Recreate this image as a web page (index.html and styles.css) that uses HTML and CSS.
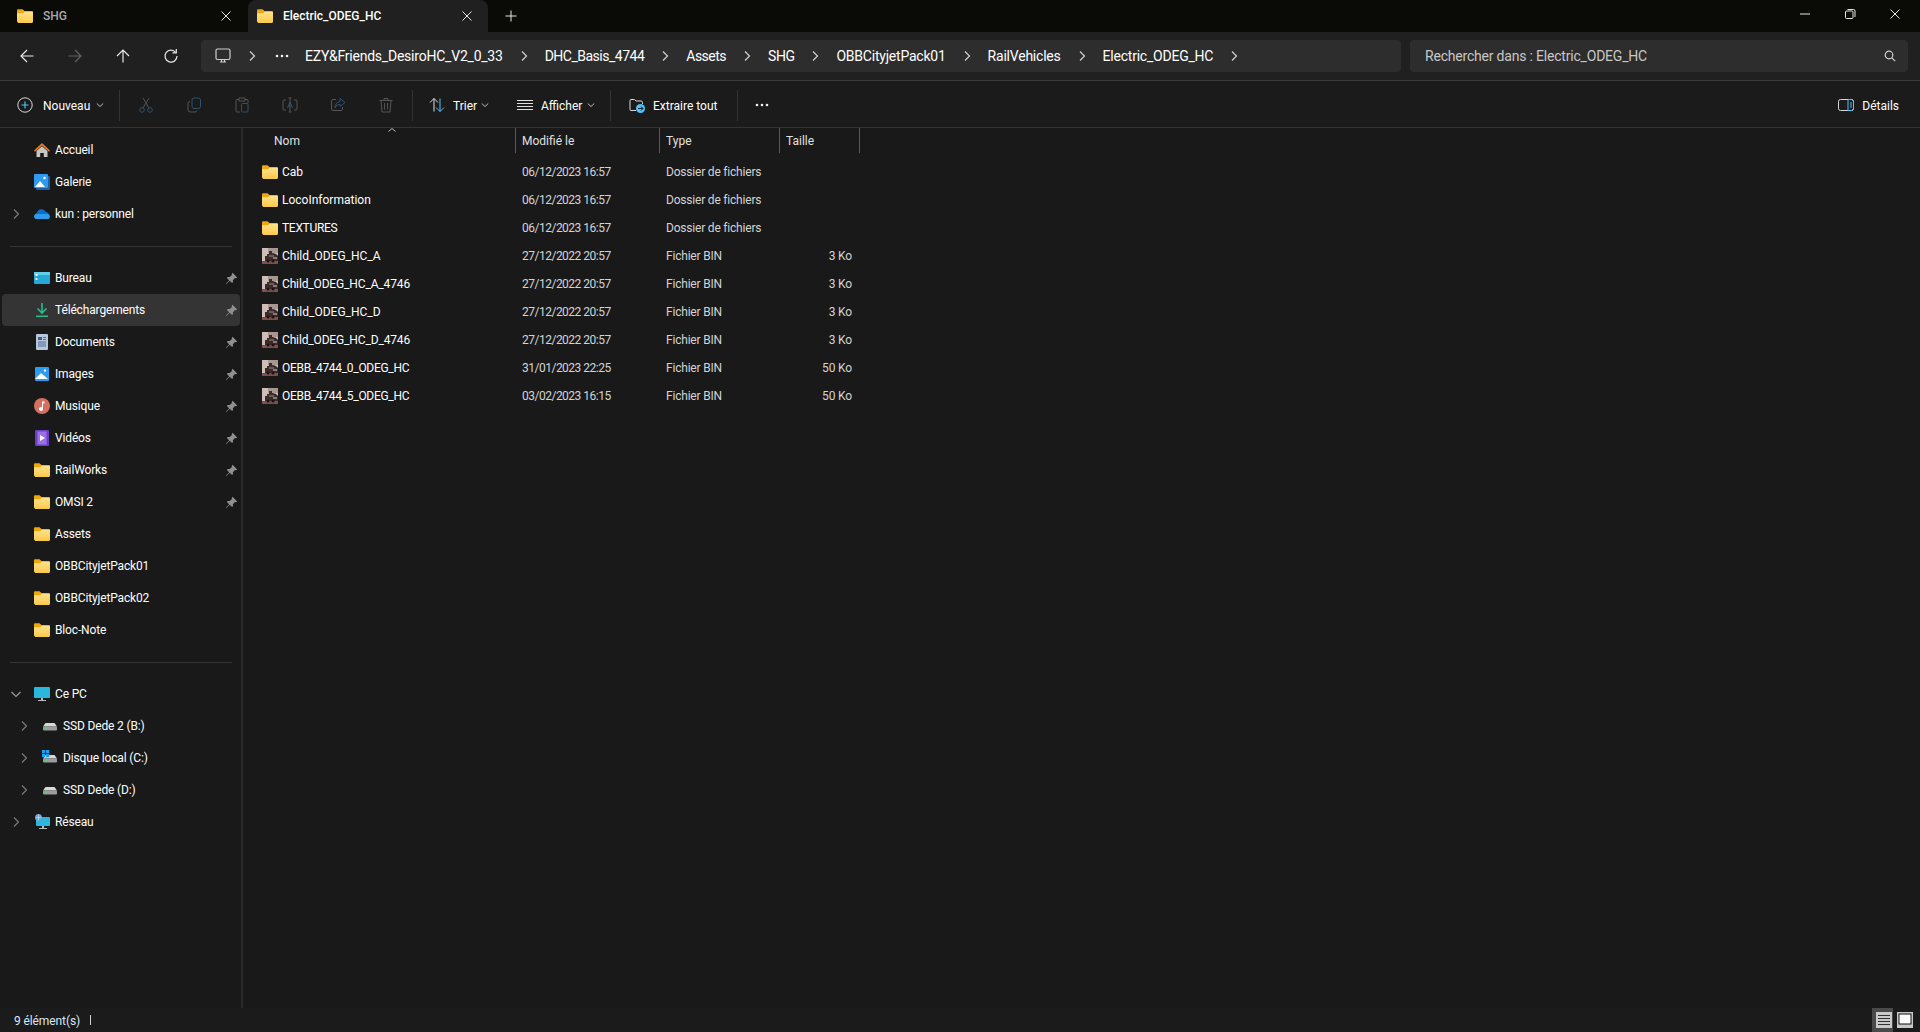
FILE: index.html
```html
<!DOCTYPE html>
<html lang="fr">
<head>
    <meta charset="UTF-8">
    <title>Electric_ODEG_HC</title>
    <link rel="stylesheet" href="styles.css">
</head>
<body>
    <!-- icons used more than once -->
    <svg class="defs">
        <defs>
            <linearGradient id="folderFront" x1="0" y1="0" x2="0" y2="1">
                <stop offset="0" stop-color="#ffe38a"/>
                <stop offset="1" stop-color="#fcc94a"/>
            </linearGradient>
            <symbol id="folder" viewBox="0 0 16 16">
                <path d="M0 2.5C0 1.7.6 1.2 1.3 1.2h4.2l2 1.8h7.2c.7 0 1.3.5 1.3 1.2V6H0z" fill="#eba80f"/>
                <path d="M0 5.2h6l1.6-1.4h7.1c.7 0 1.3.5 1.3 1.2v8.7c0 .7-.6 1.2-1.3 1.2H1.3C.6 14.1 0 13.600 0 12.900z" fill="url(#folderFront)"/>
            </symbol>
            <symbol id="train" viewBox="0 0 16 16">
                <rect width="16" height="16" fill="#cdbfb8"/>
                <rect x="6" width="10" height="5" fill="#a89690"/>
                <path d="M3 13V8h2V6h2V3h3v2c2 0 5 1 6 3v5z" fill="#3a2a29"/>
                <path d="M7 7h5v2H7z" fill="#6f5a55"/>
                <path d="M11 9h4v2h-4z" fill="#8c7a75"/>
                <rect y="13" width="16" height="3" fill="#7d4f4c"/>
                <circle cx="6" cy="13" r="1.500" fill="#1f1413"/>
                <circle cx="11" cy="13" r="1.500" fill="#1f1413"/>
            </symbol>
            <symbol id="pin" viewBox="0 0 12 12">
                <path d="M7 .8l4.200 4.200-1 .7-.9-.2-2 2 .1 1.800-.9.900-2.100-2.200L1 11.400.6 11l3.300-3.400L1.700 5.500l.9-.9 1.800.1 2-2-.2-.9z" fill="#8f8f8f"/>
            </symbol>
            <symbol id="right" viewBox="0 0 12 12">
                <path d="M4 1.500L8.500 6 4 10.500" fill="none" stroke="currentColor" stroke-width="1.200"/>
            </symbol>
            <symbol id="down" viewBox="0 0 8 8">
                <path d="M.8 2.500L4 5.500l3.200-3" fill="none" stroke="#bdbdbd" stroke-width="1"/>
            </symbol>
            <symbol id="close" viewBox="0 0 12 12">
                <path d="M1.500 1.500l9 9M10.500 1.500l-9 9" fill="none" stroke="#e6e6e6" stroke-width="1"/>
            </symbol>
            <symbol id="dots" viewBox="0 0 14 4">
                <circle cx="2" cy="2" r="1.300" fill="#f0f0f0"/>
                <circle cx="7" cy="2" r="1.300" fill="#f0f0f0"/>
                <circle cx="12" cy="2" r="1.300" fill="#f0f0f0"/>
            </symbol>
            <symbol id="disk" viewBox="0 0 16 16">
                <path d="M1 8.500L3.500 5h9L15 8.500z" fill="#d8d8d8"/>
                <rect x="1" y="8.500" width="14" height="4" rx="1" fill="#9d9d9d"/>
                <rect x="3" y="10" width="2" height="1" fill="#44d07a"/>
            </symbol>
        </defs>
    </svg>

    <div class="window">
        <div class="titlebar">
            <div class="tab">
                <svg class="ico16"><use href="#folder"/></svg>
                <span class="tab-name">SHG</span>
                <svg class="tab-close"><use href="#close"/></svg>
            </div>
            <div class="tab active">
                <svg class="ico16"><use href="#folder"/></svg>
                <span class="tab-name">Electric_ODEG_HC</span>
                <svg class="tab-close"><use href="#close"/></svg>
            </div>
            <svg class="tab-plus" viewBox="0 0 12 12"><path d="M6 .5v11M.5 6h11" stroke="#e6e6e6" stroke-width="1"/></svg>
            <div class="winbtns">
                <svg class="winbtn" viewBox="0 0 12 12"><path d="M1 6h10" stroke="#e6e6e6" stroke-width="1"/></svg>
                <svg class="winbtn" viewBox="0 0 12 12"><rect x="1.500" y="3" width="7.500" height="7.500" rx="1" fill="none" stroke="#e6e6e6"/><path d="M3.500 1.500h6a1.500 1.500 0 0 1 1.500 1.500v6" fill="none" stroke="#e6e6e6"/></svg>
                <svg class="winbtn" viewBox="0 0 12 12"><use href="#close"/></svg>
            </div>
        </div>

        <div class="navbar">
            <div class="navbtns">
                <svg class="navbtn" viewBox="0 0 16 16"><path d="M14.500 8H2M8 2L2 8l6 6" fill="none" stroke="#e8e8e8" stroke-width="1.200"/></svg>
                <svg class="navbtn" viewBox="0 0 16 16"><path d="M1.500 8H14M8 2l6 6-6 6" fill="none" stroke="#636363" stroke-width="1.200"/></svg>
                <svg class="navbtn" viewBox="0 0 16 16"><path d="M8 14.500V2M2 8l6-6 6 6" fill="none" stroke="#e8e8e8" stroke-width="1.200"/></svg>
                <svg class="navbtn" viewBox="0 0 16 16"><path d="M12.800 4.500A6 6 0 1 0 14 8" fill="none" stroke="#e8e8e8" stroke-width="1.200"/><path d="M9.500 4.800h3.800V1" fill="none" stroke="#e8e8e8" stroke-width="1.200"/></svg>
            </div>
            <div class="address">
                <svg class="pc-ico" viewBox="0 0 16 16"><rect x="1" y="1" width="14" height="10.500" rx="1.500" fill="none" stroke="#cfcfcf" stroke-width="1.200"/><path d="M5 14h6M6.500 12v2M9.500 12v2" stroke="#cfcfcf" stroke-width="1.200"/></svg>
                <svg class="sep-arrow"><use href="#right"/></svg>
                <svg class="more"><use href="#dots"/></svg>
                <span class="crumb">EZY&amp;Friends_DesiroHC_V2_0_33</span>
                <svg class="sep-arrow"><use href="#right"/></svg>
                <span class="crumb narrow">DHC_Basis_4744</span>
                <svg class="sep-arrow"><use href="#right"/></svg>
                <span class="crumb narrow">Assets</span>
                <svg class="sep-arrow"><use href="#right"/></svg>
                <span class="crumb narrow">SHG</span>
                <svg class="sep-arrow"><use href="#right"/></svg>
                <span class="crumb">OBBCityjetPack01</span>
                <svg class="sep-arrow"><use href="#right"/></svg>
                <span class="crumb">RailVehicles</span>
                <svg class="sep-arrow"><use href="#right"/></svg>
                <span class="crumb">Electric_ODEG_HC</span>
                <svg class="sep-arrow"><use href="#right"/></svg>
            </div>
            <div class="search">
                <span>Rechercher dans : Electric_ODEG_HC</span>
                <svg class="search-ico" viewBox="0 0 12 12"><circle cx="5" cy="5" r="3.800" fill="none" stroke="#d0d0d0" stroke-width="1.200"/><path d="M7.800 7.800l3.400 3.400" stroke="#d0d0d0" stroke-width="1.200"/></svg>
            </div>
        </div>

        <div class="cmdbar">
            <div class="cmd cmd-new">
                <svg class="ico16" viewBox="0 0 16 16"><circle cx="8" cy="8" r="7.200" fill="none" stroke="#d8d8d8"/><path d="M8 4.500v7M4.500 8h7" stroke="#4cc2ff" stroke-width="1.200"/></svg>
                <span class="cmd-label label-new">Nouveau</span>
                <svg class="caret"><use href="#down"/></svg>
            </div>
            <div class="cmd-sep"></div>
            <div class="cmd-icon first-tool">
                <svg class="ico16" viewBox="0 0 16 16"><path d="M5 1l6 10M11 1L5 11" stroke="#555" fill="none"/><circle cx="4" cy="13" r="2.300" fill="none" stroke="#2d5273"/><circle cx="12" cy="13" r="2.300" fill="none" stroke="#2d5273"/></svg>
            </div>
            <div class="cmd-icon">
                <svg class="ico16" viewBox="0 0 16 16"><rect x="6" y="1" width="8.500" height="10.500" rx="2" fill="none" stroke="#2d5273"/><path d="M4 4.500A2 2 0 0 0 2 6.500v6A2.500 2.500 0 0 0 4.500 15H9a2 2 0 0 0 2-1.500" fill="none" stroke="#555"/></svg>
            </div>
            <div class="cmd-icon">
                <svg class="ico16" viewBox="0 0 16 16"><path d="M5 2.500H3A1 1 0 0 0 2 3.500V14a1 1 0 0 0 1 1h3M11 2.500h2a1 1 0 0 1 1 1V6M5 1h6v3H5z" fill="none" stroke="#555"/><rect x="7.500" y="6.500" width="6.500" height="8.500" rx="1" fill="none" stroke="#2d5273"/></svg>
            </div>
            <div class="cmd-icon">
                <svg class="ico16" viewBox="0 0 16 16"><path d="M4 3H2a1 1 0 0 0-1 1v8a1 1 0 0 0 1 1h2M12 3h2a1 1 0 0 1 1 1v8a1 1 0 0 1-1 1h-2" fill="none" stroke="#555"/><path d="M5.500 11L8 5l2.500 6M6.500 9h3" fill="none" stroke="#2d5273"/><path d="M8 1v14M6.500 1h3M6.500 15h3" fill="none" stroke="#555"/></svg>
            </div>
            <div class="cmd-icon">
                <svg class="ico16" viewBox="0 0 16 16"><path d="M6 2.500H3a1.500 1.500 0 0 0-1.500 1.500v8A1.500 1.500 0 0 0 3 13.500h8a1.500 1.500 0 0 0 1.500-1.500v-2" fill="none" stroke="#555"/><path d="M10 1.500l5 4-5 4V7.500C7.500 7.500 6 8.500 5 11c0-4 2-6 5-6.500z" fill="none" stroke="#2d5273"/></svg>
            </div>
            <div class="cmd-icon">
                <svg class="ico16" viewBox="0 0 16 16"><path d="M1.500 3.500h13M6 3.500V1.500h4v2M3 3.500l1 11.500h8l1-11.500M6.500 6v6.500M9.500 6v6.500" fill="none" stroke="#555"/></svg>
            </div>
            <div class="cmd-sep sep-tools"></div>
            <div class="cmd cmd-sort">
                <svg class="ico16" viewBox="0 0 16 16"><path d="M5 14.500V1.500M1 5.500l4-4 4 4" fill="none" stroke="#e0e0e0"/><path d="M11 1.500v13M7 10.500l4 4 4-4" fill="none" stroke="#4cc2ff"/></svg>
                <span class="cmd-label label-sort">Trier</span>
                <svg class="caret"><use href="#down"/></svg>
            </div>
            <div class="cmd cmd-view">
                <svg class="ico16" viewBox="0 0 16 16"><path d="M0 3.500h16M0 6.500h16M0 9.500h16M0 12.500h16" stroke="#e0e0e0"/></svg>
                <span class="cmd-label label-view">Afficher</span>
                <svg class="caret"><use href="#down"/></svg>
            </div>
            <div class="cmd-sep"></div>
            <div class="cmd cmd-extract">
                <svg class="ico16" viewBox="0 0 16 16"><path d="M1 3.500A1 1 0 0 1 2 2.500h3.500l1.500 1.500h5a1.500 1.500 0 0 1 1.500 1.500V7M1 3.500V12.500A1 1 0 0 0 2 13.500h5" fill="none" stroke="#d8d8d8"/><circle cx="11.500" cy="11.500" r="4.500" fill="#4cc2ff"/><path d="M9 11.500h5M12 9.500l2 2-2 2" fill="none" stroke="#1a1a1a"/></svg>
                <span class="cmd-label">Extraire tout</span>
            </div>
            <div class="cmd-sep"></div>
            <svg class="cmd-more"><use href="#dots"/></svg>
            <div class="cmd cmd-details">
                <svg class="ico16" viewBox="0 0 16 16"><rect x=".5" y="2.500" width="15" height="11" rx="2" fill="none" stroke="#d8d8d8"/><path d="M10 2.500h3.500a2 2 0 0 1 2 2v7a2 2 0 0 1-2 2H10z" fill="none" stroke="#4cc2ff"/><path d="M12 6h2M12 8h2M12 10h2" stroke="#4cc2ff"/></svg>
                <span class="cmd-label">Détails</span>
            </div>
        </div>

        <div class="main">
            <nav class="sidebar">
                <div class="row">
                    <span class="arrow"></span>
                    <svg class="ico16" viewBox="0 0 16 16"><path d="M8 1L0 8.500l1 1.200L8 3.400l7 6.300 1-1.200z" fill="#e8792b"/><path d="M2.500 9L8 4.200 13.500 9v6H9.800v-4H6.200v4H2.500z" fill="#c9c6c2"/></svg>
                    <span class="row-label">Accueil</span>
                </div>
                <div class="row">
                    <span class="arrow"></span>
                    <svg class="ico16" viewBox="0 0 16 16"><rect x="2" y="2" width="14" height="14" rx="1" fill="#1d5fa8"/><rect width="14" height="14" rx="1" fill="#2f9bf0"/><path d="M1 13l5-6 5 6z" fill="#fff"/><circle cx="10.500" cy="4" r="1.300" fill="#fff"/></svg>
                    <span class="row-label">Galerie</span>
                </div>
                <div class="row">
                    <svg class="arrow"><use href="#right"/></svg>
                    <svg class="ico16" viewBox="0 0 16 16"><path d="M3.500 13A3.300 3.300 0 0 1 2.800 6.700 5 5 0 0 1 12 6a3.600 3.600 0 0 1 .5 7z" fill="#0f6cc9"/><path d="M0 10.500A2.500 2.500 0 0 1 3 8h10a2.600 2.600 0 0 1 3 2.500A2.500 2.500 0 0 1 13 13H3a2.500 2.500 0 0 1-3-2.500z" fill="#2a9df0"/></svg>
                    <span class="row-label">kun : personnel</span>
                </div>
                <div class="row-sep"></div>
                <div class="row">
                    <span class="arrow"></span>
                    <svg class="ico16" viewBox="0 0 16 16"><rect y="2" width="16" height="12" rx="1" fill="#27a9d8"/><rect y="2" width="16" height="3" fill="#5ed0ee"/><rect x="1.500" y="4" width="2" height="2" fill="#fff"/><rect x="1.500" y="8" width="2" height="2" fill="#d8f3fb"/></svg>
                    <span class="row-label">Bureau</span>
                    <svg class="pin"><use href="#pin"/></svg>
                </div>
                <div class="row selected">
                    <span class="arrow"></span>
                    <svg class="ico16" viewBox="0 0 16 16"><path d="M8 1v9.500M3.500 6.500L8 11l4.500-4.500" fill="none" stroke="#27b98e" stroke-width="1.600"/><rect x="2" y="13.500" width="12" height="1.500" fill="#27b98e"/></svg>
                    <span class="row-label">Téléchargements</span>
                    <svg class="pin"><use href="#pin"/></svg>
                </div>
                <div class="row">
                    <span class="arrow"></span>
                    <svg class="ico16" viewBox="0 0 16 16"><rect x="2" y="0" width="12" height="16" rx="1" fill="#b8c7dc"/><rect x="4" y="3" width="4" height="3" fill="#3e5f8a"/><path d="M9 3.500h3M9 5.500h3M4 8h8M4 10h8M4 12h8" stroke="#4e6d96"/></svg>
                    <span class="row-label">Documents</span>
                    <svg class="pin"><use href="#pin"/></svg>
                </div>
                <div class="row">
                    <span class="arrow"></span>
                    <svg class="ico16" viewBox="0 0 16 16"><rect x="1" y="1" width="14" height="14" rx="1" fill="#2a9df0"/><path d="M1 13l6-6 7 6z" fill="#fff"/><circle cx="11" cy="4.500" r="1.200" fill="#fff"/></svg>
                    <span class="row-label">Images</span>
                    <svg class="pin"><use href="#pin"/></svg>
                </div>
                <div class="row">
                    <span class="arrow"></span>
                    <svg class="ico16" viewBox="0 0 16 16"><circle cx="8" cy="8" r="8" fill="#d5705e"/><path d="M8 3.500h2.500v2H9V11a2 2 0 1 1-1-1.700z" fill="#fff"/></svg>
                    <span class="row-label">Musique</span>
                    <svg class="pin"><use href="#pin"/></svg>
                </div>
                <div class="row">
                    <span class="arrow"></span>
                    <svg class="ico16" viewBox="0 0 16 16"><rect x="1" width="14" height="16" rx="1" fill="#6b3fc2"/><rect x="3.500" y="1.500" width="9" height="13" fill="#9a6fe8"/><path d="M6 5l5 3-5 3z" fill="#fff"/></svg>
                    <span class="row-label">Vidéos</span>
                    <svg class="pin"><use href="#pin"/></svg>
                </div>
                <div class="row">
                    <span class="arrow"></span>
                    <svg class="ico16"><use href="#folder"/></svg>
                    <span class="row-label">RailWorks</span>
                    <svg class="pin"><use href="#pin"/></svg>
                </div>
                <div class="row">
                    <span class="arrow"></span>
                    <svg class="ico16"><use href="#folder"/></svg>
                    <span class="row-label">OMSI 2</span>
                    <svg class="pin"><use href="#pin"/></svg>
                </div>
                <div class="row">
                    <span class="arrow"></span>
                    <svg class="ico16"><use href="#folder"/></svg>
                    <span class="row-label">Assets</span>
                </div>
                <div class="row">
                    <span class="arrow"></span>
                    <svg class="ico16"><use href="#folder"/></svg>
                    <span class="row-label">OBBCityjetPack01</span>
                </div>
                <div class="row">
                    <span class="arrow"></span>
                    <svg class="ico16"><use href="#folder"/></svg>
                    <span class="row-label">OBBCityjetPack02</span>
                </div>
                <div class="row">
                    <span class="arrow"></span>
                    <svg class="ico16"><use href="#folder"/></svg>
                    <span class="row-label">Bloc-Note</span>
                </div>
                <div class="row-sep"></div>
                <div class="row">
                    <svg class="arrow" viewBox="0 0 12 12"><path d="M1.500 4L6 8.500 10.500 4" fill="none" stroke="#9a9a9a" stroke-width="1.200"/></svg>
                    <svg class="ico16" viewBox="0 0 16 16"><rect y="1" width="16" height="11" rx="1" fill="#2bb6dc"/><path d="M7 12h2v2h3v1H4v-1h3z" fill="#b5c0c6"/></svg>
                    <span class="row-label">Ce PC</span>
                </div>
                <div class="row sub">
                    <svg class="arrow"><use href="#right"/></svg>
                    <svg class="ico16"><use href="#disk"/></svg>
                    <span class="row-label">SSD Dede 2 (B:)</span>
                </div>
                <div class="row sub">
                    <svg class="arrow"><use href="#right"/></svg>
                    <svg class="ico16" viewBox="0 0 16 16"><use href="#disk"/><path d="M0 0h3.300v3.300H0zM4 0h3.300v3.300H4zM0 4h3.300v3.300H0zM4 4h3.300v3.300H4z" fill="#1aa0ef"/></svg>
                    <span class="row-label">Disque local (C:)</span>
                </div>
                <div class="row sub">
                    <svg class="arrow"><use href="#right"/></svg>
                    <svg class="ico16"><use href="#disk"/></svg>
                    <span class="row-label">SSD Dede (D:)</span>
                </div>
                <div class="row">
                    <svg class="arrow"><use href="#right"/></svg>
                    <svg class="ico16" viewBox="0 0 16 16"><rect x="2" y="3" width="14" height="9" rx="1" fill="#2bb6dc"/><path d="M8 12h2v2h3v1H5v-1h3z" fill="#b5c0c6"/><circle cx="4.500" cy="3.500" r="3.500" fill="#6aa5d8"/><path d="M2 3.500h5M4.500 .5v6" stroke="#cfe4f5" stroke-width=".6"/></svg>
                    <span class="row-label">Réseau</span>
                </div>
            </nav>

            <section class="files">
                <div class="file-head">
                    <div class="head-cell col-name">Nom<svg class="sort-mark" viewBox="0 0 8 4"><path d="M.5 3.500L4 .5l3.500 3" fill="none" stroke="#bdbdbd"/></svg></div>
                    <div class="head-cell col-date">Modifié le</div>
                    <div class="head-cell col-type">Type</div>
                    <div class="head-cell col-size">Taille</div>
                </div>
                <div class="file-row">
                    <div class="cell-name"><svg class="ico16"><use href="#folder"/></svg><span>Cab</span></div>
                    <div class="cell-date">06/12/2023 16:57</div>
                    <div class="cell-type">Dossier de fichiers</div>
                    <div class="cell-size"></div>
                </div>
                <div class="file-row">
                    <div class="cell-name"><svg class="ico16"><use href="#folder"/></svg><span>LocoInformation</span></div>
                    <div class="cell-date">06/12/2023 16:57</div>
                    <div class="cell-type">Dossier de fichiers</div>
                    <div class="cell-size"></div>
                </div>
                <div class="file-row">
                    <div class="cell-name"><svg class="ico16"><use href="#folder"/></svg><span class="tighter">TEXTURES</span></div>
                    <div class="cell-date">06/12/2023 16:57</div>
                    <div class="cell-type">Dossier de fichiers</div>
                    <div class="cell-size"></div>
                </div>
                <div class="file-row">
                    <div class="cell-name"><svg class="ico16"><use href="#train"/></svg><span>Child_ODEG_HC_A</span></div>
                    <div class="cell-date">27/12/2022 20:57</div>
                    <div class="cell-type">Fichier BIN</div>
                    <div class="cell-size">3 Ko</div>
                </div>
                <div class="file-row">
                    <div class="cell-name"><svg class="ico16"><use href="#train"/></svg><span class="tight">Child_ODEG_HC_A_4746</span></div>
                    <div class="cell-date">27/12/2022 20:57</div>
                    <div class="cell-type">Fichier BIN</div>
                    <div class="cell-size">3 Ko</div>
                </div>
                <div class="file-row">
                    <div class="cell-name"><svg class="ico16"><use href="#train"/></svg><span>Child_ODEG_HC_D</span></div>
                    <div class="cell-date">27/12/2022 20:57</div>
                    <div class="cell-type">Fichier BIN</div>
                    <div class="cell-size">3 Ko</div>
                </div>
                <div class="file-row">
                    <div class="cell-name"><svg class="ico16"><use href="#train"/></svg><span class="tight">Child_ODEG_HC_D_4746</span></div>
                    <div class="cell-date">27/12/2022 20:57</div>
                    <div class="cell-type">Fichier BIN</div>
                    <div class="cell-size">3 Ko</div>
                </div>
                <div class="file-row">
                    <div class="cell-name"><svg class="ico16"><use href="#train"/></svg><span class="tighter">OEBB_4744_0_ODEG_HC</span></div>
                    <div class="cell-date">31/01/2023 22:25</div>
                    <div class="cell-type">Fichier BIN</div>
                    <div class="cell-size">50 Ko</div>
                </div>
                <div class="file-row">
                    <div class="cell-name"><svg class="ico16"><use href="#train"/></svg><span class="tighter">OEBB_4744_5_ODEG_HC</span></div>
                    <div class="cell-date">03/02/2023 16:15</div>
                    <div class="cell-type">Fichier BIN</div>
                    <div class="cell-size">50 Ko</div>
                </div>
            </section>
        </div>

        <div class="statusbar">
            <span class="count">9 élément(s)</span>
            <span class="status-sep"></span>
            <div class="views">
                <div class="view-btn on">
                    <svg class="view-ico" viewBox="0 0 16 16"><rect width="16" height="16" fill="#c9c9c9"/><path d="M2 3.500h12M2 6.500h12M2 9.500h12M2 12.500h12" stroke="#333"/></svg>
                </div>
                <div class="view-btn">
                    <svg class="view-ico" viewBox="0 0 16 16"><rect width="16" height="16" fill="#c9c9c9"/><rect x="2" y="2" width="12" height="10" fill="#fff" stroke="#111"/></svg>
                </div>
            </div>
        </div>
    </div>
</body>
</html>
```

FILE: styles.css
```css
* {
    margin: 0;
    padding: 0;
    box-sizing: border-box;
}
body {
    background: #191919;
    color: #fff;
    font-family: Roboto, "Liberation Sans", sans-serif;
    font-size: 12px;
    overflow: hidden;
}
svg {
    display: block;
    flex: none;
}
.defs {
    width: 0;
    height: 0;
}
.window {
    display: flex;
    flex-direction: column;
    height: 1032px;
}
.ico16 {
    width: 16px;
    height: 16px;
}

/* title bar + tabs */
.titlebar {
    display: flex;
    align-items: flex-end;
    height: 32px;
    background: #0a0a06;
    flex: none;
}
.tab {
    display: flex;
    align-items: center;
    width: 240px;
    height: 32px;
    padding: 0 8px 0 17px;
    color: #a9a9a9;
}
.tab.active {
    margin-left: 8px;
    padding: 0 15px 0 9px;
    background: #202020;
    border-radius: 8px 8px 0 0;
    color: #fff;
}
.tab-name {
    margin-left: 10px;
    font-weight: 500;
}
.tab-close {
    width: 12px;
    height: 12px;
    margin-left: auto;
}
.tab-plus {
    width: 12px;
    height: 12px;
    margin: 0 0 10px 17px;
}
.winbtns {
    display: flex;
    gap: 33px;
    margin: 0 19px 12px auto;
}
.winbtn {
    width: 12px;
    height: 12px;
}

/* back/forward + address */
.navbar {
    display: flex;
    align-items: center;
    height: 49px;
    padding-bottom: 1px;
    background: #202020;
    border-bottom: 1px solid #3c3c3c;
    flex: none;
}
.navbtns {
    display: flex;
    gap: 32px;
    width: 201px;
    padding-left: 19px;
}
.navbtn {
    width: 16px;
    height: 16px;
}
.address {
    display: flex;
    align-items: center;
    width: 1200px;
    height: 32px;
    padding-left: 14px;
    background: #2d2d2d;
    border-radius: 4px;
    font-size: 14px;
    letter-spacing: -0.22px;
}
.crumb.narrow {
    letter-spacing: -0.5px;
}
.pc-ico {
    width: 16px;
    height: 16px;
}
.sep-arrow {
    width: 12px;
    height: 12px;
    margin: 0 15px;
    color: #d0d0d0;
}
.more {
    width: 14px;
    height: 4px;
    margin: 0 16px 0 2px;
}
.search {
    display: flex;
    align-items: center;
    justify-content: space-between;
    width: 498px;
    height: 32px;
    margin-left: 9px;
    padding: 0 12px 0 15px;
    background: #2d2d2d;
    border-radius: 4px;
    color: #c8c8c8;
    font-size: 14px;
    letter-spacing: -0.2px;
}
.search-ico {
    width: 12px;
    height: 12px;
}

/* command bar */
.cmdbar {
    display: flex;
    align-items: center;
    height: 47px;
    padding-top: 2px;
    background: #1b1b1b;
    border-bottom: 1px solid #333;
    flex: none;
}
.cmd {
    display: flex;
    align-items: center;
}
.cmd-label {
    margin-left: 8px;
    padding-top: 1px;
}
.caret {
    width: 8px;
    height: 8px;
    margin-left: 2px;
}
.cmd-sep {
    width: 1px;
    height: 31px;
    background: #333;
    flex: none;
}
.cmd-new {
    width: 119px;
    padding-left: 17px;
}
.label-new {
    width: 51px;
    margin-left: 10px;
}
.cmd-icon {
    display: flex;
    justify-content: center;
    width: 48px;
}
.first-tool {
    margin-left: 2px;
}
.sep-tools {
    margin-left: 2px;
}
.cmd-sort {
    width: 96px;
    padding-left: 16px;
}
.label-sort {
    width: 26px;
}
.cmd-view {
    width: 101px;
    padding-left: 8px;
}
.label-view {
    width: 44px;
}
.cmd-extract {
    width: 126px;
    padding-left: 18px;
}
.cmd-more {
    width: 14px;
    height: 4px;
    margin-left: 17px;
}
.cmd-details {
    margin-left: auto;
    padding-right: 21px;
}

/* left tree */
.main {
    display: flex;
    flex: 1;
    min-height: 0;
}
.sidebar {
    width: 243px;
    padding-top: 6px;
    border-right: 2px solid #2b2b2b;
    letter-spacing: -0.15px;
    flex: none;
}
.row {
    display: flex;
    align-items: center;
    width: 238px;
    height: 32px;
    margin-left: 2px;
    border-radius: 4px;
}
.row.selected {
    background: #343434;
}
.row.sub {
    padding-left: 8px;
}
.arrow {
    width: 12px;
    height: 12px;
    margin: 0 12px 0 8px;
    color: #7a7a7a;
}
.row-label {
    margin-left: 5px;
}
.pin {
    width: 13px;
    height: 13px;
    margin: 0 2px 0 auto;
}
.row-sep {
    width: 222px;
    height: 1px;
    margin: 16px 0 15px 10px;
    background: #333;
}

/* details list */
.files {
    flex: 1;
}
.file-head {
    display: flex;
    height: 25px;
    margin-bottom: 5px;
    color: #e0e0e0;
}
.head-cell {
    display: flex;
    align-items: center;
    position: relative;
    padding-left: 6px;
    border-right: 1px solid #5a5a5a;
}
.col-name {
    width: 273px;
    padding-left: 31px;
}
.col-date {
    width: 144px;
}
.col-type {
    width: 120px;
}
.col-size {
    width: 80px;
}
.sort-mark {
    position: absolute;
    left: 145px;
    top: 0;
    width: 8px;
    height: 4px;
}
.file-row {
    display: flex;
    align-items: center;
    height: 28px;
    color: #d4d4d4;
}
.cell-name {
    display: flex;
    align-items: center;
    width: 273px;
    padding-left: 19px;
    color: #fff;
}
.cell-name span {
    margin-left: 4px;
}
.cell-name .tight {
    letter-spacing: -0.15px;
}
.cell-name .tighter {
    letter-spacing: -0.3px;
}
.cell-date {
    width: 144px;
    padding-left: 6px;
    letter-spacing: -0.5px;
}
.cell-type {
    width: 120px;
    padding-left: 6px;
    letter-spacing: -0.2px;
}
.cell-size {
    width: 72px;
    text-align: right;
    letter-spacing: -0.15px;
}

/* bottom */
.statusbar {
    display: flex;
    align-items: center;
    height: 24px;
    padding-left: 14px;
    background: #1b1b1b;
    color: #d8e6f5;
    flex: none;
}
.count {
    padding-top: 2px;
    letter-spacing: -0.1px;
}
.status-sep {
    width: 1px;
    height: 10px;
    margin-left: 10px;
    background: #d0d0d0;
}
.views {
    display: flex;
    margin-left: auto;
    padding-right: 6px;
}
.view-btn {
    display: flex;
    align-items: center;
    justify-content: center;
    width: 21px;
    height: 24px;
    padding-left: 3px;
}
.view-btn.on {
    background: #4a4a4a;
}
.view-ico {
    width: 16px;
    height: 16px;
}
```
